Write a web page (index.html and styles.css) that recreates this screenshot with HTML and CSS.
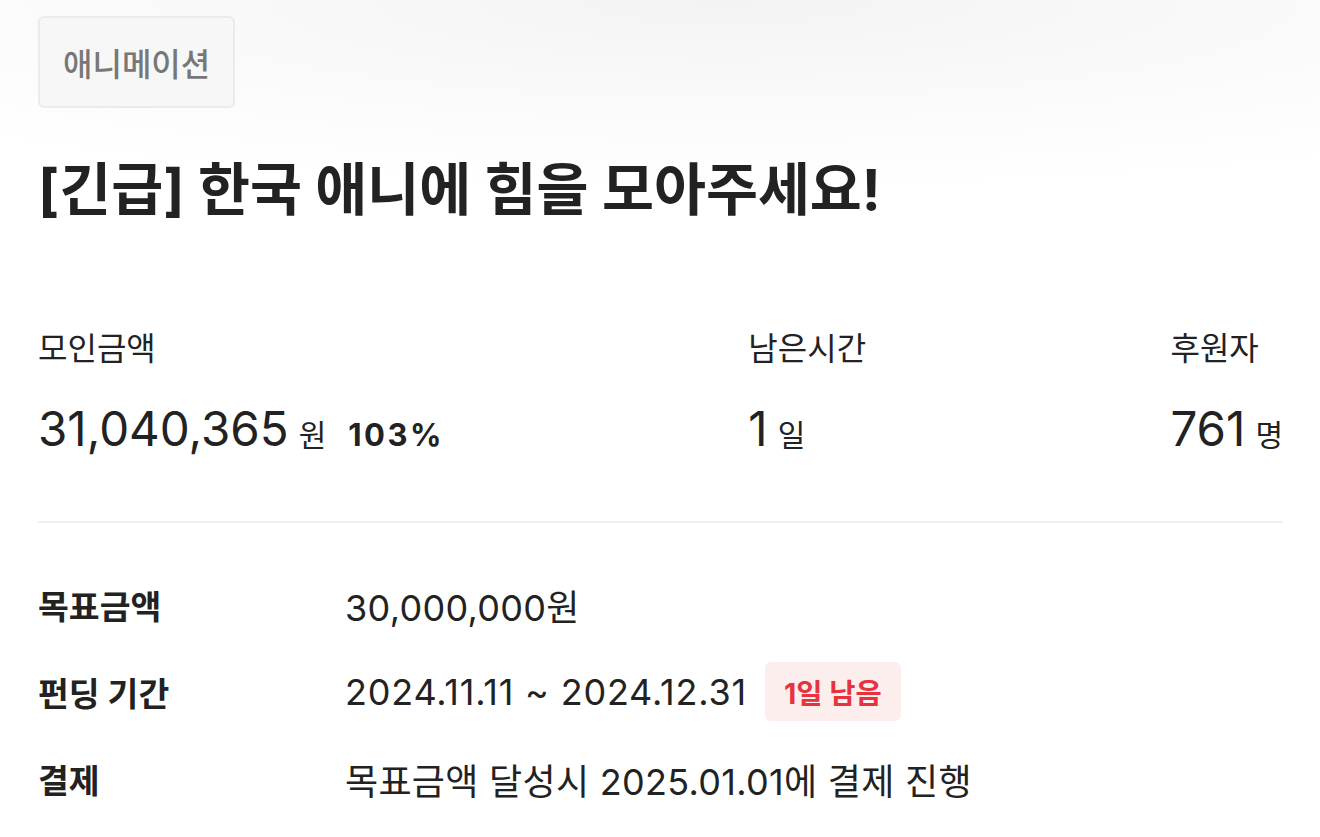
FILE: index.html
```html
<!DOCTYPE html>
<html lang="ko">
<head>
<meta charset="utf-8">
<link rel="stylesheet" href="styles.css">
</head>
<body>
<main class="page">
  <span class="tag">애니메이션</span>
  <h1 class="title">[긴급] 한국 애니에 힘을 모아주세요!</h1>
  <section class="stats">
    <div class="stat">
      <div class="stat-label">모인금액</div>
      <div class="stat-value"><span class="num">31,040,365</span><span class="unit">원</span><span class="pct">103%</span></div>
    </div>
    <div class="stat">
      <div class="stat-label">남은시간</div>
      <div class="stat-value"><span class="num">1</span><span class="unit">일</span></div>
    </div>
    <div class="stat">
      <div class="stat-label">후원자</div>
      <div class="stat-value"><span class="num">761</span><span class="unit">명</span></div>
    </div>
  </section>
  <hr class="divider">
  <dl class="info">
    <div class="info-row">
      <dt>목표금액</dt>
      <dd>30,000,000원</dd>
    </div>
    <div class="info-row">
      <dt>펀딩 기간</dt>
      <dd><span class="dates">2024.11.11 ~ 2024.12.31</span><span class="badge">1일 남음</span></dd>
    </div>
    <div class="info-row">
      <dt>결제</dt>
      <dd>목표금액 달성시 2025.01.01에 결제 진행</dd>
    </div>
  </dl>
</main>
</body>
</html>
```

FILE: styles.css
```css
html, body {
  margin: 0;
  padding: 0;
}
body {
  background-color: #fff;
  background-image: radial-gradient(ellipse 1100px 190px at 55% 0, #f3f3f3 0%, #f9f9f9 45%, #ffffff 100%);
  background-repeat: no-repeat;
  font-family: Inter, "Noto Sans CJK KR", sans-serif;
  color: #222;
  min-height: 837px;
}
.page {
  padding: 16px 37px 0 38px;
}
.tag {
  display: inline-flex;
  align-items: center;
  box-sizing: border-box;
  height: 92px;
  padding: 0 23px;
  background: #f7f7f7;
  border: 2px solid #ebebeb;
  border-radius: 6px;
  font-size: 32px;
  font-weight: 500;
  color: #777;
}
.title {
  margin: 47px 0 0;
  font-size: 56.5px;
  line-height: 70px;
  font-weight: 700;
  color: #222;
}
.stats {
  display: flex;
  justify-content: space-between;
  margin-top: 102px;
}
.stat-label {
  font-size: 32px;
  line-height: 44px;
  color: #222;
}
.stat-value {
  display: flex;
  align-items: baseline;
  margin-top: 30px;
  line-height: 56px;
}
.num {
  font-size: 47.5px;
  font-weight: 400;
}
.unit {
  font-size: 30px;
  margin-left: 10px;
}
.pct {
  font-size: 31px;
  font-weight: 700;
  letter-spacing: 2.5px;
  margin-left: 22px;
}
.divider {
  margin: 58px 0 0;
  border: 0;
  height: 2px;
  background: #f0f0f0;
}
.info {
  margin: 38px 0 0;
}
.info-row {
  display: flex;
  align-items: center;
  height: 87px;
}
.info dt {
  width: 307px;
  font-size: 33.5px;
  font-weight: 700;
}
.info dd {
  margin: 0;
  display: flex;
  align-items: center;
  font-size: 36px;
  letter-spacing: 0.3px;
}
.dates {
  letter-spacing: 0.8px;
}
.badge {
  display: inline-flex;
  align-items: center;
  height: 59px;
  padding: 0 19px;
  margin-left: 18px;
  background: #fdeeee;
  border-radius: 6px;
  color: #e5343e;
  font-size: 28.5px;
  font-weight: 700;
  letter-spacing: 0;
}
```
